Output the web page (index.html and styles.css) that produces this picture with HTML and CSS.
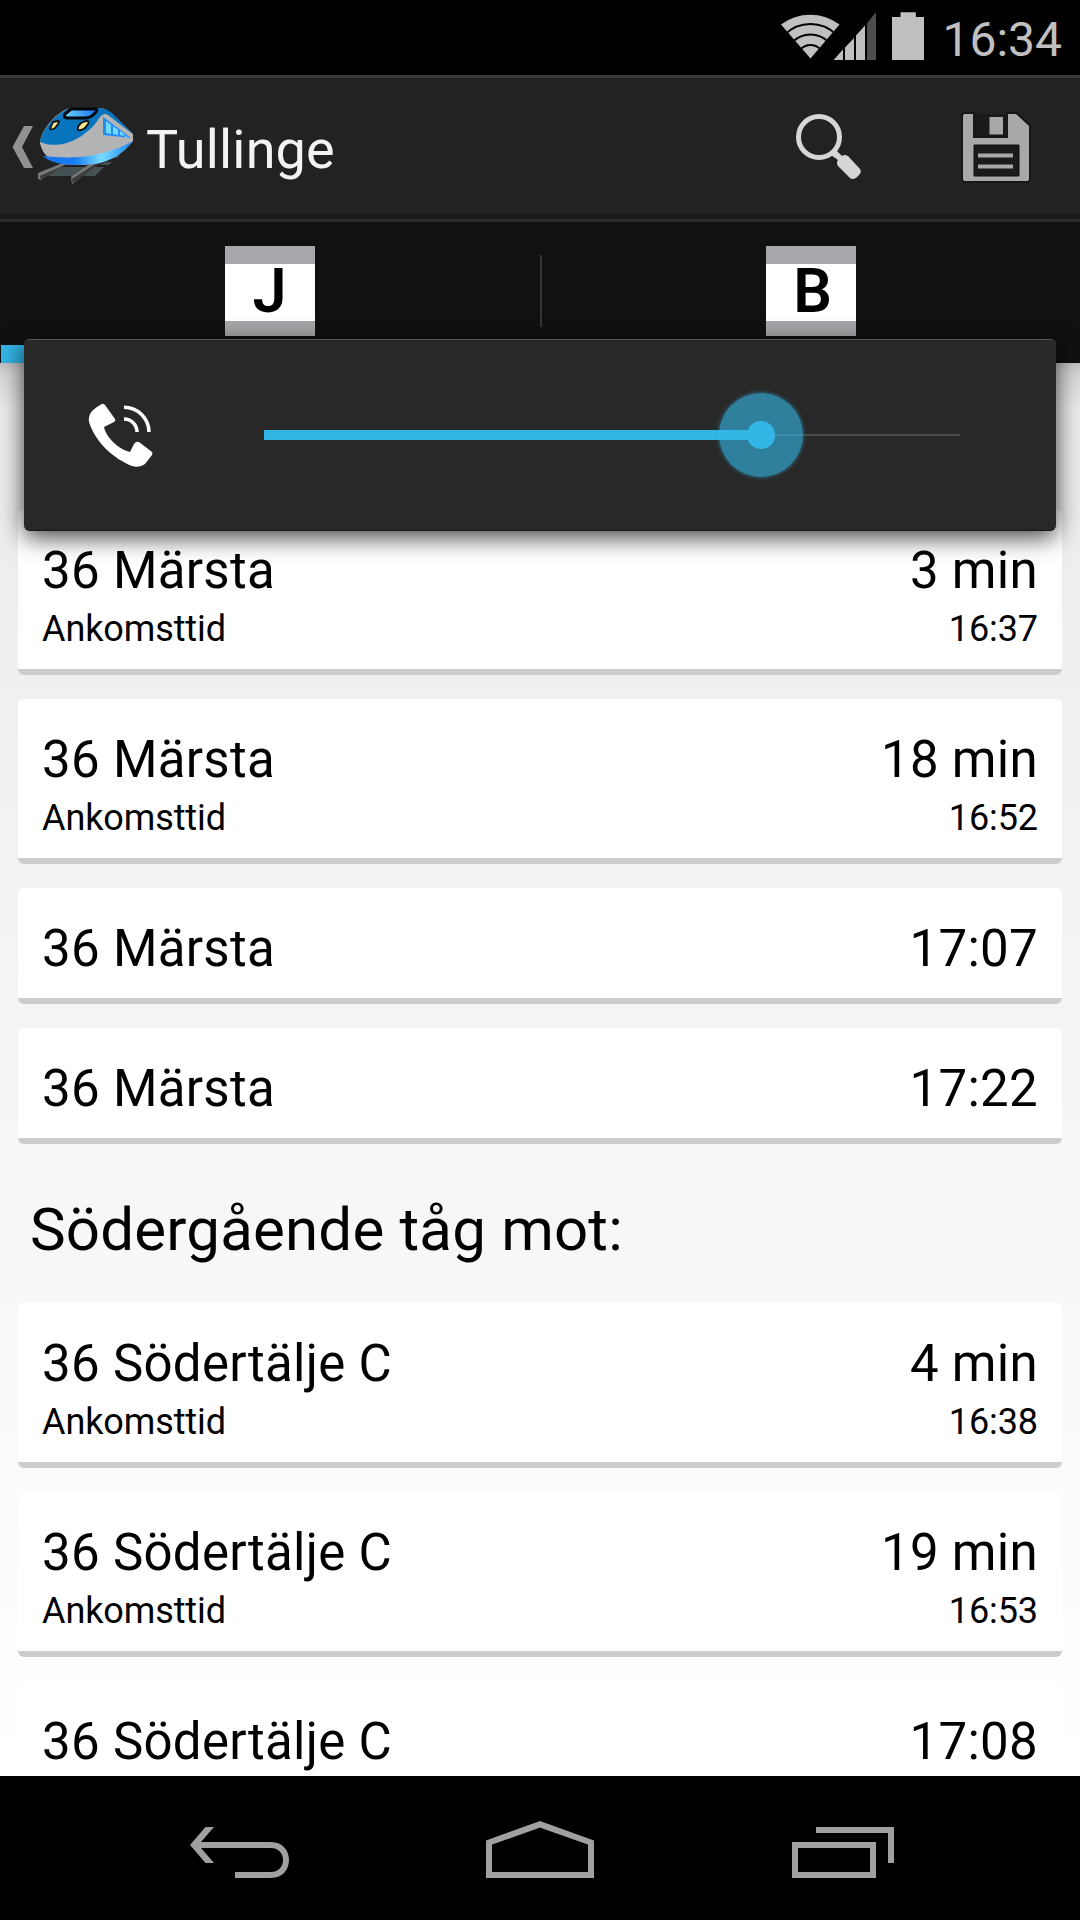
FILE: index.html
```html
<!DOCTYPE html>
<html lang="sv">
<head>
<meta charset="utf-8">
<title>Tullinge</title>
<link rel="stylesheet" href="styles.css">
</head>
<body>
<div class="screen">
  <header class="status">
    <svg class="status-icons" width="148" height="75" viewBox="0 0 148 75">
      <defs><clipPath id="fan"><path d="M0 24.500 A49 49 0 0 1 58.500 24.500 L29.500 58.500 Z"/></clipPath></defs>
      <g clip-path="url(#fan)">
        <rect width="60" height="75" fill="#c0c0c0"/>
        <g fill="none" stroke="#000" stroke-width="2"><circle cx="29.500" cy="60.500" r="36.500"/><circle cx="29.500" cy="59.500" r="25"/><circle cx="29.500" cy="58.500" r="13.500"/></g>
      </g>
      <path d="M52.500 60 L62 49.500 V60Z M64 47.500 L73 38 V60H64Z M75 35.500 L84 25.500 V60H75Z" fill="#c0c0c0"/>
      <path d="M86 23.500 L95 12 V60H86Z" fill="#4d4d4d"/>
      <path d="M111 17h8.500v-4.700h15.300V17H143v43h-32Z" fill="#c0c0c0"/>
    </svg>
    <span class="clock">16:34</span>
  </header>

  <div class="actionbar">
    <svg class="up" width="22" height="44" viewBox="0 0 22 44"><path d="M12 1H21L10 22 21 43H12L0.500 22Z" fill="#919191"/></svg>
    <svg class="train" width="98" height="80" viewBox="0 0 98 80">
      <defs>
        <linearGradient id="skirt"><stop offset="0" stop-color="#1878ef"/><stop offset=".35" stop-color="#177cf2"/><stop offset=".65" stop-color="#7bdcff"/><stop offset="1" stop-color="#1684f5"/></linearGradient>
        <linearGradient id="glass"><stop offset="0" stop-color="#70d2ff"/><stop offset="1" stop-color="#1674f5"/></linearGradient>
      </defs>
      <path d="M17 63L24 60H66L57 69H10ZM67 55H74L71 58H62ZM74 48H82L79 51H70ZM80 41H89L86 44H77Z" fill="#465153"/>
      <path d="M0 66L27 55H34L3 69V73L0 72Z" fill="#777"/><path d="M2 69L27 58 3 73Z" fill="#3c3c3c"/>
      <path d="M33 70L77 39H84L38 72V75L34 77Z" fill="#777"/><path d="M34 72L80 42 35 77Z" fill="#3c3c3c"/>
      <path d="M2 36C2 24 20 2 34 1L63 1Q68 2 73 6L95 27V34C86 45 76 53 54 57 26 60 6 56 2 36Z" fill="#b4b4b5"/>
      <path d="M2 35C4 22 22 2 34 1H62Q69 2 74 6L96 28 70 8Q66 5 62 10L57 17C43 33 22 43 2 35Z" fill="#0874bd"/>
      <path d="M5 49C31 52 62 52 95 34C85 46 75 54 57 57Q18 61 5 49Z" fill="url(#skirt)"/>
      <path d="M65 10Q66 10 68 12L93 31 65 28Z" fill="#238cf9"/>
      <path d="M68 14L73 18V27L68 26ZM75 19L80 23V28L75 27ZM82 24L86 27V29L82 28ZM87 28L91 31 87 30Z" fill="#70dcff"/>
      <path d="M33 2H57Q60 2 58 5L55 8Q52 11 47 11H30Q25 11 27 7Z" fill="url(#glass)" stroke="#02070b" stroke-width="3"/>
      <path d="M15 15L20 14Q22 14 20 17L17 21Q14 23 12 22ZM43 16L48 14Q52 14 50 17L47 21Q43 24 40 23 39 20 43 16Z" fill="#fbe98b" stroke="#111" stroke-width="1.800"/>
    </svg>
    <h1 class="title">Tullinge</h1>
    <svg class="search" width="68" height="68" viewBox="0 0 68 68"><circle cx="24" cy="24" r="20.500" fill="none" stroke="#d6d6d6" stroke-width="5"/><path d="M36 42L41 37 47 43Q49 41 53 43L65 56Q67 59 64 62L61 65Q57 67 55 65L43 53Q41 50 43 47Z" fill="#d6d6d6"/></svg>
    <svg class="save" width="74" height="74" viewBox="0 0 74 74"><path d="M4 5Q4 3 6 3H14V27H49V3H57L70 15V68Q70 70 68 70H6Q4 70 4 68Z" fill="#a8a8a8" stroke="#171717" stroke-width="4" paint-order="stroke"/><path d="M15 3H48.500V25.500H15Z" fill="#1a1a1a"/><path d="M30.500 6H44V23.500H30.500Z" fill="#a8a8a8"/><path d="M15 34H60V65H15Z" fill="#1b1b1b" stroke="#111"/><path d="M19 42.500H54V46.500H19ZM19 53.500H54V57.500H19Z" fill="#a8a8a8"/></svg>
  </div>

  <nav class="tabs">
    <div class="tab tab-active"><span class="line-sign">J</span></div>
    <div class="tab"><span class="line-sign line-b">B</span></div>
  </nav>

  <main class="list">
    <section class="group">
      <article class="card"><div class="row"><span>36 Märsta</span><span>3 min</span></div><div class="row sub"><span>Ankomsttid</span><span>16:37</span></div></article>
      <article class="card"><div class="row"><span>36 Märsta</span><span>18 min</span></div><div class="row sub"><span>Ankomsttid</span><span>16:52</span></div></article>
      <article class="card short"><div class="row"><span>36 Märsta</span><span>17:07</span></div></article>
      <article class="card short"><div class="row"><span>36 Märsta</span><span>17:22</span></div></article>
    </section>
    <h2 class="heading">Södergående tåg mot:</h2>
    <section class="group">
      <article class="card"><div class="row"><span>36 Södertälje C</span><span>4 min</span></div><div class="row sub"><span>Ankomsttid</span><span>16:38</span></div></article>
      <article class="card"><div class="row"><span>36 Södertälje C</span><span>19 min</span></div><div class="row sub"><span>Ankomsttid</span><span>16:53</span></div></article>
      <article class="card short"><div class="row"><span>36 Södertälje C</span><span>17:08</span></div></article>
    </section>
  </main>

  <footer class="navbar">
    <svg width="100" height="60" viewBox="0 0 100 60"><path d="M15.500 7H24L11 22H81C105 22 105 58 81 58H45V52H81C97 52 97 28 81 28H11L24 43H15.500L0 25Z" fill="#a0a0a0"/></svg>
    <svg class="home" width="108" height="60" viewBox="0 0 108 60"><path d="M3 55V22.500L54 4.300 105 22.500V55Z" fill="none" stroke="#a0a0a0" stroke-width="6"/></svg>
    <svg width="102" height="60" viewBox="0 0 102 60"><path d="M3 25H81V55H3ZM24 10H99V43" fill="none" stroke="#a0a0a0" stroke-width="6"/></svg>
  </footer>

  <div class="volume">
    <svg class="phone" width="66" height="66" viewBox="0 0 66 66"><path d="M13 1.500Q15 0 17 2L27 16Q28 18 26 19L16 24C18 34 30 46 42 49L46 41Q48 38 51 39L64 49Q65 50 64 52L57 61Q52 65 44 63C24 55 7 38 1 19Q0 13 4 8Q8 4 13 1.500Z" fill="#fff"/><path d="M36 16A13 13 0 0 1 49 29M36 4.300A25 25 0 0 1 61 29" fill="none" stroke="#fff" stroke-width="3.500"/></svg>
    <div class="slider"><div class="fill"></div><div class="thumb"></div></div>
  </div>
</div>
</body>
</html>
```
FILE: styles.css
```css
* { box-sizing: border-box; }
body { margin: 0; font-family: Roboto, sans-serif; color: #000; }
svg { display: block; flex: none; }

.screen { position: relative; width: 1080px; height: 1920px; overflow: hidden; display: flex; flex-direction: column; background: #000; }

.status { height: 75px; flex: none; display: flex; align-items: center; justify-content: flex-end; padding-right: 18px; background: #000; }
.status-icons { margin-right: 13px; }
.clock { font-size: 48px; line-height: 58px; padding-top: 5px; color: #c0c0c0; }

.actionbar { height: 147px; flex: none; display: flex; align-items: flex-start; padding-left: 12px; background: #222; border-top: 3px solid #3a3a3a; border-bottom: 3px solid #2b2b2b; box-shadow: inset 0 -6px #1b1b1b; }
.up { margin-top: 47px; }
.train { margin: 29px 0 0 4px; }
.title { margin: 40px 0 0 10px; font-size: 54px; line-height: 64px; font-weight: 400; letter-spacing: .15px; color: #f3f3f3; }
.search { margin: 35px 0 0 auto; }
.save { margin: 33px 47px 0 96px; }

.tabs { height: 141px; flex: none; display: flex; background: #111; }
.tab { flex: 0 0 50%; display: flex; justify-content: center; align-items: flex-start; padding-top: 24px; }
.tab + .tab { padding-left: 2px; background: linear-gradient(#333, #333) 0 33px / 2px 72px no-repeat; }
.tab-active { background: linear-gradient(#33b5e5, #33b5e5) 1px 100% / 539px 18px no-repeat; }
.line-sign { width: 90px; height: 90px; background: linear-gradient(#a7a8ab 18px, #fff 18px, #fff 75px, #a7a8ab 75px); padding: 18px 1px 0 0; font-size: 61px; line-height: 55px; font-weight: 600; text-align: center; }
.line-b { padding: 18px 0 0 3px; }

.list { height: 1413px; flex: none; overflow: hidden; padding: 147px 18px 0; background: linear-gradient(rgba(0,0,0,.18), rgba(0,0,0,.09) 10px, rgba(0,0,0,0) 45px) top / 100% 45px no-repeat, linear-gradient(#ebebeb, #fff); }
.group { display: flex; flex-direction: column; gap: 24px; }
.card { height: 165px; flex: none; padding: 31px 24px 0; background: #fff; border-radius: 6px; border-bottom: 6px solid #ccc; }
.short { height: 116px; }
.row { display: flex; justify-content: space-between; font-size: 51px; line-height: 60px; letter-spacing: .3px; }
.sub { font-size: 36px; line-height: 44px; margin-top: 6px; letter-spacing: -.1px; }
.heading { margin: 0; padding: 50px 12px 0; height: 159px; font-size: 60px; line-height: 72px; font-weight: 400; letter-spacing: .2px; }

.navbar { height: 144px; flex: none; display: flex; justify-content: space-between; padding: 44px 186px 0 190px; background: #000; }
.home { margin: 0 1px 0 -1px; }

.volume { position: absolute; left: 24px; top: 339px; width: 1032px; height: 192px; display: flex; align-items: center; padding: 0 96px 0 64px; background: #282828; border-radius: 6px; border-top: 1px solid #555; border-bottom: 1px solid #161616; box-shadow: 0 6px 24px rgba(0,0,0,.75); }
.phone { margin: 1px 110px 0 0; }
.slider { position: relative; flex: none; width: 696px; height: 84px; background: linear-gradient(#494949, #494949) center / 100% 2px no-repeat; }
.fill { position: absolute; left: 0; top: 37px; width: 497px; height: 10px; background: #33b5e5; }
.thumb { position: absolute; left: 455px; top: 0; width: 84px; height: 84px; border-radius: 50%; background: radial-gradient(circle, #33b5e5 13.500px, rgba(51,181,229,.62) 14.500px); box-shadow: 0 0 4px rgba(51,181,229,.6); }
```
